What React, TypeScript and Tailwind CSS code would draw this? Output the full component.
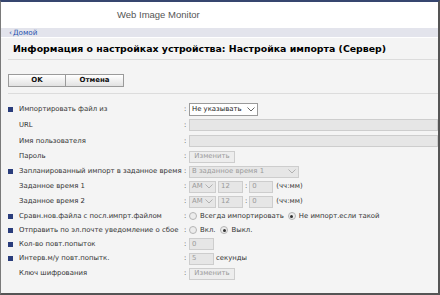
import React from 'react';

const Chevron: React.FC<{ color?: string }> = ({ color = '#555' }) => (
  <svg width="8" height="5" viewBox="0 0 8 5" className="shrink-0">
    <polyline points="0.5,0.5 4,4 7.5,0.5" fill="none" stroke={color} strokeWidth="0.9" />
  </svg>
);

const Radio: React.FC<{ checked?: boolean }> = ({ checked }) => (
  <span className="w-[8px] h-[8px] rounded-full border border-[#b5b5b5] bg-[#ececec] flex items-center justify-center shrink-0">
    {checked && <span className="w-[3px] h-[3px] rounded-full bg-[#333]" />}
  </span>
);

const DisabledBox: React.FC<{ w: string; children?: React.ReactNode }> = ({ w, children }) => (
  <span className={`${w} h-[12px] bg-[#e6e6e6] border border-[#cdcdcd] flex items-center px-[2px] text-[#9a9a9a]`}>
    {children}
  </span>
);

type Row = {
  label: string;
  bullet?: boolean;
  h: string;
  value: React.ReactNode;
};

const App: React.FC = () => {
  const changeBtn = (
    <span className="h-[12px] w-[46px] bg-[#ededed] border border-[#cdcdcd] flex items-center justify-center text-[#9a9a9a]">
      Изменить
    </span>
  );

  const timeRow = (
    <div className="flex items-center">
      <span className="w-[27px] h-[12px] bg-[#e6e6e6] border border-[#cdcdcd] flex items-center justify-between px-[2px] text-[#9a9a9a]">
        AM <Chevron color="#aaa" />
      </span>
      <span className="ml-[2px]">
        <DisabledBox w="w-[25px]">12</DisabledBox>
      </span>
      <span className="mx-[2px]">:</span>
      <DisabledBox w="w-[24px]">0</DisabledBox>
      <span className="ml-[3px]">(чч:мм)</span>
    </div>
  );

  const rows: Row[] = [
    {
      label: 'Импортировать файл из',
      bullet: true,
      h: 'h-[16px]',
      value: (
        <span className="w-[69px] h-[13px] bg-white border border-[#9a9a9a] flex items-center justify-between px-[2px] text-[#222]">
          Не указывать <Chevron />
        </span>
      ),
    },
    { label: 'URL', h: 'h-[16px]', value: <DisabledBox w="flex-1" /> },
    { label: 'Имя пользователя', h: 'h-[16px]', value: <DisabledBox w="flex-1" /> },
    { label: 'Пароль', h: 'h-[15px]', value: changeBtn },
    {
      label: 'Запланированный импорт в заданное время',
      bullet: true,
      h: 'h-[15px]',
      value: (
        <span className="w-[110px] h-[12px] bg-[#e6e6e6] border border-[#cdcdcd] flex items-center justify-between px-[2px] text-[#9a9a9a]">
          В заданное время 1 <Chevron color="#aaa" />
        </span>
      ),
    },
    { label: 'Заданное время 1', h: 'h-[15px]', value: timeRow },
    { label: 'Заданное время 2', h: 'h-[15px]', value: timeRow },
    {
      label: 'Сравн.нов.файла с посл.импрт.файлом',
      bullet: true,
      h: 'h-[14px]',
      value: (
        <div className="flex items-center">
          <Radio />
          <span className="ml-[3px]">Всегда импортировать</span>
          <span className="ml-[4px]"><Radio checked /></span>
          <span className="ml-[3px]">Не импорт.если такой</span>
        </div>
      ),
    },
    {
      label: 'Отправить по эл.почте уведомление о сбое',
      bullet: true,
      h: 'h-[14px]',
      value: (
        <div className="flex items-center">
          <Radio />
          <span className="ml-[3px]">Вкл.</span>
          <span className="ml-[5px]"><Radio checked /></span>
          <span className="ml-[3px]">Выкл.</span>
        </div>
      ),
    },
    {
      label: 'Кол-во повт.попыток',
      bullet: true,
      h: 'h-[14px]',
      value: <DisabledBox w="w-[25px]">0</DisabledBox>,
    },
    {
      label: 'Интерв.м/у повт.попытк.',
      bullet: true,
      h: 'h-[15px]',
      value: (
        <div className="flex items-center">
          <DisabledBox w="w-[25px]">5</DisabledBox>
          <span className="ml-[2px]">секунды</span>
        </div>
      ),
    },
    { label: 'Ключ шифрования', h: 'h-[15px]', value: changeBtn },
  ];

  return (
    <div className="w-[440px] h-[295px] flex flex-col bg-white border-t-2 border-t-[#36466f] border-l border-l-[#7a7a7a] border-r-2 border-r-[#555] border-b-2 border-b-[#555] overflow-hidden font-['DejaVu_Sans',Verdana,sans-serif]">
      <div className="h-[26px] flex items-center pl-[116px] bg-white">
        <span className="text-[9.5px] text-[#555] font-['Liberation_Sans',Arial,sans-serif]">Web Image Monitor</span>
      </div>
      <div className="h-[9px] bg-[#e3e4ec] flex items-center pl-[8px] text-[7.2px] text-[#2a55b0] leading-none">
        <span className="mr-[1px]">‹</span>Домой
      </div>
      <div className="h-px bg-white" />
      <div className="flex-1 bg-[#f4f4f4] pl-[7px] text-[6.9px] text-[#333] leading-none">
        <div className="h-[22px] flex items-center pl-[5px] border-b border-[#dcdcdc]">
          <h1 className="text-[9.4px] font-bold text-black whitespace-nowrap">
            Информация о настройках устройства: Настройка импорта (Сервер)
          </h1>
        </div>
        <div className="pt-[14px] pb-[6px] border-b border-[#dcdcdc] flex">
          <button className="w-[58px] h-[13px] border border-[#9a9a9a] bg-gradient-to-b from-white to-[#e2e2e2] text-[7px] font-bold text-[#111] leading-none">
            OK
          </button>
          <button className="w-[58px] h-[13px] border border-l-0 border-[#9a9a9a] bg-gradient-to-b from-white to-[#e2e2e2] text-[7px] font-bold text-[#111] leading-none">
            Отмена
          </button>
        </div>
        <div className="pt-[7px]">
          {rows.map((r) => (
            <div key={r.label} className={`${r.h} flex items-center`}>
              <div className="w-[11px] flex items-center">
                {r.bullet && <span className="w-[5px] h-[5px] bg-[#2a3d7c]" />}
              </div>
              <div className="w-[165px] whitespace-nowrap">{r.label}</div>
              <div className="w-[5px]">:</div>
              <div className="flex-1 flex items-center">{r.value}</div>
            </div>
          ))}
        </div>
      </div>
    </div>
  );
};

export default App;
